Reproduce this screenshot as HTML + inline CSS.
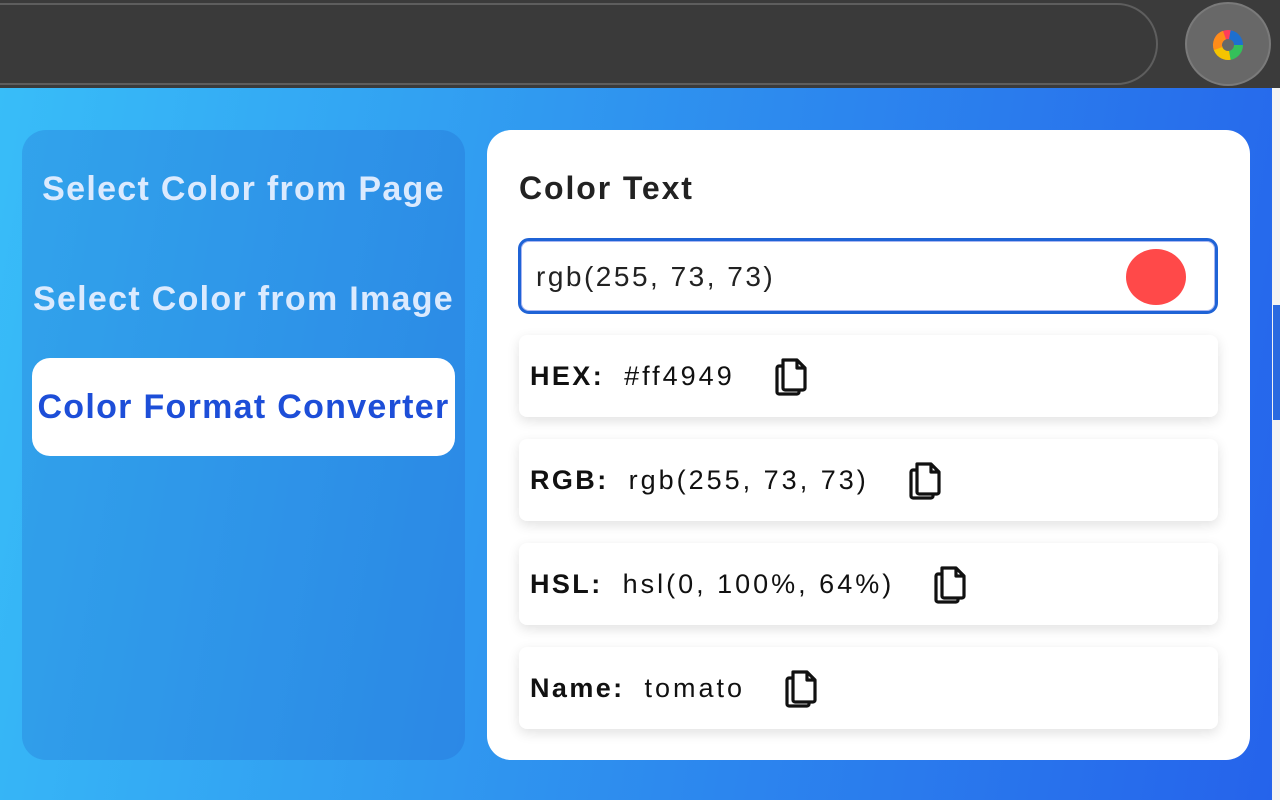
<!DOCTYPE html>
<html><head><meta charset="utf-8"><style>
*{box-sizing:border-box;margin:0;padding:0}
body{width:1280px;height:800px;overflow:hidden;background:#3c3c3c;font-family:"Liberation Sans",sans-serif;position:relative}
.top{position:absolute;left:0;top:0;width:1280px;height:88px;background:#3b3b3b}
.addr{position:absolute;left:-40px;top:3px;width:1198px;height:82px;border:2px solid #5e5e5e;border-radius:41px;background:#3a3a3a}
.ext{position:absolute;left:1185px;top:2px;width:86px;height:84px;border-radius:50%;background:#686868;border:2px solid #7a7a7a}
.strip{position:absolute;left:1272px;top:88px;width:8px;height:712px;background:#f3f3f3}
.strip i{position:absolute;left:1px;top:217px;width:7px;height:115px;background:#2a6ae0}
.pop{position:absolute;left:0;top:88px;width:1272px;height:712px;background:linear-gradient(100deg,#38bdf8 0%,#2f94ef 45%,#2563eb 100%)}
.left{position:absolute;left:22px;top:42px;width:443px;height:630px;border-radius:24px;background:rgba(30,90,200,0.25)}
.nav{position:absolute;left:10px;width:423px;height:98px;display:flex;align-items:center;justify-content:center;font-size:34px;font-weight:bold;color:#dbeafe;white-space:nowrap;letter-spacing:1.3px}
.nav.on{background:#fff;border-radius:18px;color:#1d4ed8}
.card{position:absolute;left:487px;top:42px;width:763px;height:630px;background:#fff;border-radius:24px}
h1{position:absolute;left:32px;top:40px;font-size:32px;font-weight:bold;color:#222;letter-spacing:1.9px}
.inp{position:absolute;left:31px;top:108px;width:700px;height:76px;border:3px solid #1f63d6;border-radius:11px;box-shadow:0 0 0 1px #a9b6f2 inset}
.inp span{position:absolute;left:15px;top:20px;font-size:28px;color:#222;letter-spacing:2.5px}
.dot{position:absolute;left:605px;top:8px;width:60px;height:56px;border-radius:50%;background:#ff4949}
.row{position:absolute;left:32px;width:699px;height:82px;border-radius:8px;background:#fff;box-shadow:0 4px 12px rgba(0,0,0,0.12);display:flex;align-items:center;padding-left:11px;font-size:27px;color:#111;letter-spacing:3px;white-space:nowrap}
.row b{margin-right:20px;letter-spacing:2.4px}
.row svg{margin-left:36px}
</style></head><body>
<div class="top"><div class="addr"></div>
<div class="ext"><svg width="86" height="84" viewBox="0 0 86 84" style="position:absolute;left:-2px;top:-2px">
<g transform="translate(43,43)" fill="none" stroke-width="9">
<circle r="10.5" stroke="#ff3d5a" stroke-dasharray="16.5 66" transform="rotate(-160)"/>
<circle r="10.5" stroke="#1e6fd0" stroke-dasharray="16.5 66" transform="rotate(-80)"/>
<circle r="10.5" stroke="#34c05a" stroke-dasharray="16.5 66" transform="rotate(0)"/>
<circle r="10.5" stroke="#f5c400" stroke-dasharray="16.5 66" transform="rotate(80)"/>
<circle r="10.5" stroke="#ff8c1a" stroke-dasharray="16.5 66" transform="rotate(160)"/>
</g></svg></div></div>
<div class="strip"><i></i></div>
<div class="pop">
<div class="left">
<div class="nav" style="top:10px">Select Color from Page</div>
<div class="nav" style="top:120px">Select Color from Image</div>
<div class="nav on" style="top:228px">Color Format Converter</div>
</div>
<div class="card">
<h1>Color Text</h1>
<div class="inp"><span>rgb(255, 73, 73)</span><div class="dot"></div></div>
<div class="row" style="top:205px"><b>HEX:</b>#ff4949<svg width="40" height="40" viewBox="2 2 20 20" fill="none" stroke="#111" stroke-width="1.6" stroke-linejoin="round"><path d="M8 4h7l4 4v10a1 1 0 0 1-1 1H9a1 1 0 0 1-1-1z M15 4v4h4"/><path d="M8 7H6a1 1 0 0 0-1 1v12a1 1 0 0 0 1 1h9a1 1 0 0 0 1-1v-1"/></svg></div>
<div class="row" style="top:309px"><b>RGB:</b>rgb(255, 73, 73)<svg width="40" height="40" viewBox="2 2 20 20" fill="none" stroke="#111" stroke-width="1.6" stroke-linejoin="round"><path d="M8 4h7l4 4v10a1 1 0 0 1-1 1H9a1 1 0 0 1-1-1z M15 4v4h4"/><path d="M8 7H6a1 1 0 0 0-1 1v12a1 1 0 0 0 1 1h9a1 1 0 0 0 1-1v-1"/></svg></div>
<div class="row" style="top:413px"><b>HSL:</b>hsl(0, 100%, 64%)<svg width="40" height="40" viewBox="2 2 20 20" fill="none" stroke="#111" stroke-width="1.6" stroke-linejoin="round"><path d="M8 4h7l4 4v10a1 1 0 0 1-1 1H9a1 1 0 0 1-1-1z M15 4v4h4"/><path d="M8 7H6a1 1 0 0 0-1 1v12a1 1 0 0 0 1 1h9a1 1 0 0 0 1-1v-1"/></svg></div>
<div class="row" style="top:517px"><b>Name:</b>tomato<svg width="40" height="40" viewBox="2 2 20 20" fill="none" stroke="#111" stroke-width="1.6" stroke-linejoin="round"><path d="M8 4h7l4 4v10a1 1 0 0 1-1 1H9a1 1 0 0 1-1-1z M15 4v4h4"/><path d="M8 7H6a1 1 0 0 0-1 1v12a1 1 0 0 0 1 1h9a1 1 0 0 0 1-1v-1"/></svg></div>
</div>
</div>
</body></html>
